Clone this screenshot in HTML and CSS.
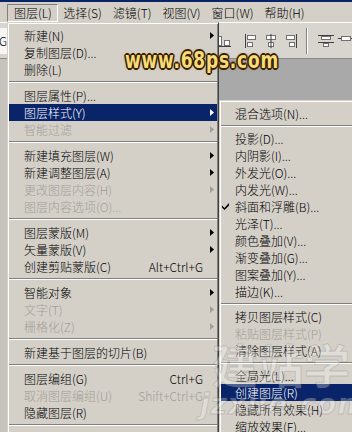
FILE: index.html
```html
<!DOCTYPE html>
<html><head>
    <title>图层菜单</title>
    <meta charset="UTF-8">
    <link rel="stylesheet" href="styles.css">
</head>
<body>
<div class="screen">
    <div class="titlebar"></div>
    <div class="menubar">
        <span class="mb-item open">图层(L)</span>
        <span class="mb-item">选择(S)</span>
        <span class="mb-item">滤镜(T)</span>
        <span class="mb-item">视图(V)</span>
        <span class="mb-item">窗口(W)</span>
        <span class="mb-item">帮助(H)</span>
    </div>

    <div class="work">
        <div class="work-left">
            <div class="opts"><div class="field">G</div></div>
            <div class="doc doc-left"></div>
        </div>
        <div class="work-right">
            <div class="opts opts-right">
                <svg class="ti ti-a" width="16" height="14" viewBox="0 0 16 14">
                    <rect x="1.5" y="2.5" width="5" height="9" fill="#fff" stroke="#707070"/>
                    <rect x="9.5" y="6.5" width="5" height="5" fill="#fff" stroke="#707070"/>
                    <line x1="0" y1="12.5" x2="16" y2="12.5" stroke="#404040"/>
                </svg>
                <svg class="ti ti-b" width="14" height="14" viewBox="0 0 14 14">
                    <line x1="1.5" y1="0" x2="1.5" y2="14" stroke="#404040"/>
                    <rect x="3.5" y="1.5" width="8" height="4" fill="#fff" stroke="#707070"/>
                    <rect x="3.5" y="8.5" width="5" height="4" fill="#fff" stroke="#707070"/>
                </svg>
                <svg class="ti ti-c" width="14" height="14" viewBox="0 0 14 14">
                    <rect x="2.5" y="1.5" width="9" height="4" fill="#fff" stroke="#707070"/>
                    <rect x="4.5" y="8.5" width="5" height="4" fill="#fff" stroke="#707070"/>
                    <line x1="7" y1="0" x2="7" y2="14" stroke="#404040"/>
                </svg>
                <svg class="ti ti-d" width="14" height="14" viewBox="0 0 14 14">
                    <line x1="12.5" y1="0" x2="12.5" y2="14" stroke="#404040"/>
                    <rect x="2.5" y="1.5" width="8" height="4" fill="#fff" stroke="#707070"/>
                    <rect x="5.5" y="8.5" width="5" height="4" fill="#fff" stroke="#707070"/>
                </svg>
                <span class="tsep"></span>
                <svg class="ti ti-e" width="16" height="14" viewBox="0 0 16 14">
                    <line x1="0" y1="1.5" x2="16" y2="1.5" stroke="#404040"/>
                    <rect x="3.5" y="2.5" width="9" height="3" fill="#fff" stroke="#707070"/>
                    <line x1="0" y1="8.5" x2="16" y2="8.5" stroke="#404040"/>
                    <rect x="5.5" y="9.5" width="5" height="3" fill="#fff" stroke="#707070"/>
                </svg>
                <svg class="ti ti-f" width="14" height="14" viewBox="0 0 14 14">
                    <line x1="0" y1="4.5" x2="14" y2="4.5" stroke="#404040"/>
                    <rect x="3.5" y="2.5" width="9" height="4" fill="#fff" stroke="#707070"/>
                </svg>
            </div>
            <div class="doc"></div>
        </div>
    </div>

    <div class="menu menu-main">
        <div class="item"><span>新建(N)</span><span class="arr"></span></div>
        <div class="item"><span>复制图层(D)...</span></div>
        <div class="item"><span>删除(L)</span></div>
        <div class="sep"></div>
        <div class="item"><span>图层属性(P)...</span></div>
        <div class="item hl"><span>图层样式(Y)</span><span class="arr"></span></div>
        <div class="item off"><span>智能过滤</span><span class="arr"></span></div>
        <div class="sep"></div>
        <div class="item"><span>新建填充图层(W)</span><span class="arr"></span></div>
        <div class="item"><span>新建调整图层(A)</span><span class="arr"></span></div>
        <div class="item off"><span>更改图层内容(H)</span><span class="arr"></span></div>
        <div class="item off"><span>图层内容选项(O)...</span></div>
        <div class="sep"></div>
        <div class="item"><span>图层蒙版(M)</span><span class="arr"></span></div>
        <div class="item"><span>矢量蒙版(V)</span><span class="arr"></span></div>
        <div class="item"><span>创建剪贴蒙版(C)</span><span class="key">Alt+Ctrl+G</span></div>
        <div class="sep"></div>
        <div class="item"><span>智能对象</span><span class="arr"></span></div>
        <div class="item off"><span>文字(T)</span><span class="arr"></span></div>
        <div class="item off"><span>栅格化(Z)</span><span class="arr"></span></div>
        <div class="sep"></div>
        <div class="item"><span>新建基于图层的切片(B)</span></div>
        <div class="sep"></div>
        <div class="item"><span>图层编组(G)</span><span class="key">Ctrl+G</span></div>
        <div class="item off"><span>取消图层编组(U)</span><span class="key">Shift+Ctrl+G</span></div>
        <div class="item"><span>隐藏图层(R)</span></div>
        <div class="sep"></div>
    </div>

    <div class="menu menu-sub">
        <div class="item"><span class="lbl">混合选项(N)...</span></div>
        <div class="sep"></div>
        <div class="item"><span class="lbl">投影(D)...</span></div>
        <div class="item"><span class="lbl">内阴影(I)...</span></div>
        <div class="item"><span class="lbl">外发光(O)...</span></div>
        <div class="item"><span class="lbl">内发光(W)...</span></div>
        <div class="item">
            <svg class="chk" width="7" height="7" viewBox="0 0 7 7"><polygon points="0,2.5 2.5,5 7,0 7,2.5 2.5,7 0,4.5" fill="#000"/></svg>
            <span class="lbl">斜面和浮雕(B)...</span>
        </div>
        <div class="item"><span class="lbl">光泽(T)...</span></div>
        <div class="item"><span class="lbl">颜色叠加(V)...</span></div>
        <div class="item"><span class="lbl">渐变叠加(G)...</span></div>
        <div class="item"><span class="lbl">图案叠加(Y)...</span></div>
        <div class="item"><span class="lbl">描边(K)...</span></div>
        <div class="sep"></div>
        <div class="item"><span class="lbl">拷贝图层样式(C)</span></div>
        <div class="item off"><span class="lbl">粘贴图层样式(P)</span></div>
        <div class="item"><span class="lbl">清除图层样式(A)</span></div>
        <div class="sep"></div>
        <div class="item"><span class="lbl">全局光(L)...</span></div>
        <div class="item hl"><span class="lbl">创建图层(R)</span></div>
        <div class="item"><span class="lbl">隐藏所有效果(H)</span></div>
        <div class="item"><span class="lbl">缩放效果(F)...</span></div>
    </div>

    <div class="wm68">www.68ps.com</div>
    <div class="wmjz">
        <div class="wmjz-cn">建站学</div>
        <div class="wmjz-en">jzxue.com</div>
    </div>
</div>
</body>
</html>
```

FILE: styles.css
```css
html, body {
    margin: 0;
    padding: 0;
    background: #ffffff;
}

body {
    font-family: "Noto Sans CJK SC", "Liberation Sans", sans-serif;
    font-size: 12px;
    font-weight: 300;
    color: #000000;
}

.screen {
    position: relative;
    width: 352px;
    height: 432px;
    overflow: hidden;
    background: #d4d0c8;
}

.titlebar {
    height: 2px;
    background: #0a246a;
}

/* menu bar */
.menubar {
    height: 20px;
    display: flex;
    align-items: flex-end;
    padding-left: 7px;
    background: #d4d0c8;
}

.mb-item {
    height: 18px;
    line-height: 18px;
    padding: 0 5.5px;
    box-sizing: border-box;
    white-space: nowrap;
}

.mb-item.open {
    border: 1px solid;
    border-color: #808080 #ffffff #ffffff #808080;
    line-height: 16px;
    padding: 0 5px 0 6px;
}

/* workspace behind the menus */
.work {
    display: flex;
    height: 410px;
}

.work-left {
    width: 222px;
    display: flex;
    flex-direction: column;
}

.work-right {
    flex: 1;
    display: flex;
    flex-direction: column;
    border-left: 1px solid #404040;
}

.opts {
    height: 35px;
    display: flex;
    align-items: center;
    border-top: 1px solid #ffffff;
    background: #d8d5cf;
}

.field {
    width: 7px;
    height: 26px;
    line-height: 26px;
    overflow: hidden;
    text-indent: -1px;
    background: #f6f6f4;
    border-right: 1px solid #a0a0a0;
}

.doc {
    flex: 1;
    background: #a9a9a9;
    border-top: 1px solid #8a8a8a;
}

.doc-left {
    background: #c6c3bc;
}

.opts-right {
    padding-left: 2px;
}

.ti {
    display: block;
}

.ti-b { margin-left: 13px; }
.ti-c { margin-left: 6px; }
.ti-d { margin-left: 6px; }
.ti-e { margin-left: 10px; }
.ti-f { margin-left: 4px; }

.tsep {
    width: 1px;
    height: 26px;
    margin-left: 8px;
    background: #808080;
    border-right: 1px solid #ffffff;
}

/* drop-down menus */
.menu {
    position: absolute;
    box-sizing: border-box;
    background: #d4d0c8;
    border: 1px solid;
    border-color: #d4d0c8 #404040 #404040 #d4d0c8;
    box-shadow: inset 1px 1px #ffffff, inset -1px -1px #808080;
    padding: 4px 1px;
}

.menu-main {
    left: 7px;
    top: 22px;
    width: 212px;
    height: 420px;
}

.menu-sub {
    left: 219px;
    top: 100px;
    width: 150px;
}

.item {
    display: grid;
    align-items: center;
    height: 17px;
    line-height: 17px;
    white-space: nowrap;
}

.menu-main .item {
    grid-template-columns: 1fr auto 14px;
    padding-left: 15px;
}

.menu-sub .item {
    grid-template-columns: 14px 1fr;
}

.menu-sub .sep {
    height: 8px;
}

.key {
    grid-column: 2;
}

.arr {
    grid-column: 3;
    width: 4px;
    height: 7px;
    margin-left: 7px;
    background: currentColor;
    clip-path: polygon(0 0, 100% 50%, 0 100%);
}

.lbl {
    grid-column: 2;
}

.chk {
    grid-column: 1;
    display: block;
    margin-left: 1px;
}

.item.off {
    color: #a29e97;
}

.item.hl {
    background: #0a246a;
    color: #ffffff;
}

.sep {
    height: 9px;
    background: linear-gradient(to bottom, transparent 3px, #808080 3px, #808080 4px, #ffffff 4px, #ffffff 5px, transparent 5px);
}

/* watermarks printed over the screenshot */
.wm68 {
    position: absolute;
    left: 125px;
    top: 50px;
    font-family: "DejaVu Sans", sans-serif;
    font-weight: bold;
    font-size: 17px;
    line-height: 17px;
    letter-spacing: 0.8px;
    color: #f6dc78;
    transform: scaleY(1.3);
    transform-origin: left top;
    text-shadow:
        1.5px 0 #3a1e00, -1.5px 0 #3a1e00, 0 1.5px #3a1e00, 0 -1.5px #3a1e00,
        1px 1px #3a1e00, -1px -1px #3a1e00, 1px -1px #3a1e00, -1px 1px #3a1e00,
        0 0 3px #a06a20;
}

.wmjz {
    position: absolute;
    left: 200px;
    top: 336px;
    color: rgba(255, 255, 255, 0.3);
    -webkit-text-stroke: 1px rgba(90, 90, 90, 0.22);
    font-weight: bold;
    pointer-events: none;
}

.wmjz-cn {
    font-size: 46px;
    line-height: 54px;
    padding-left: 12px;
}

.wmjz-en {
    font-family: "DejaVu Sans", sans-serif;
    font-style: italic;
    font-size: 28px;
    line-height: 30px;
    letter-spacing: 1px;
}
```
